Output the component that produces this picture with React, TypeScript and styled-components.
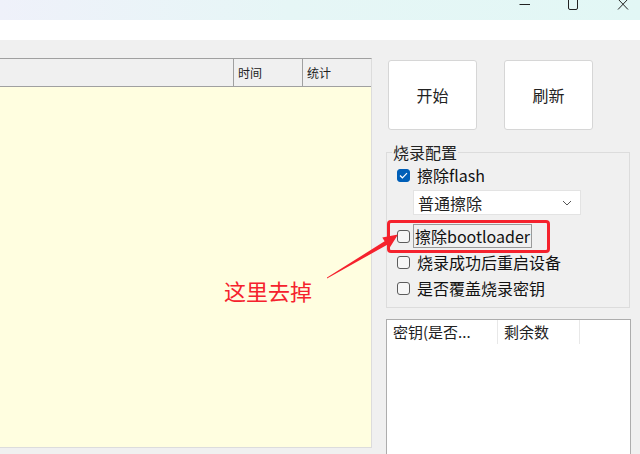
import styled, { createGlobalStyle } from "styled-components";

const GlobalStyle = createGlobalStyle`
  html, body { margin: 0; padding: 0; }
  body {
    font-family: "Noto Sans CJK SC", "Noto Sans", sans-serif;
    color: #1a1a1a;
  }
`;

const keyColumns = [
  { label: "密钥(是否...", width: 111 },
  { label: "剩余数", width: 82 },
];

const logColumns = [
  { label: "", width: 234 },
  { label: "时间", width: 69 },
  { label: "统计", width: 68 },
];

const Checkbox = ({ checked }: { checked?: boolean }) => (
  <S.Box $checked={checked}>
    {checked && (
      <svg width="9" height="7" viewBox="0 0 9 7">
        <path d="M1 3.5 L3.4 5.8 L8 1.2" fill="none" stroke="#fff" strokeWidth="1.2" />
      </svg>
    )}
  </S.Box>
);

const App = () => {
  return (
    <S.Page>
      <GlobalStyle />
      <S.TitleBar>
        <S.WinButton>
          <svg width="12" height="10" viewBox="0 0 12 10">
            <path d="M0.5 4.5 H11" stroke="#222" strokeWidth="1" />
          </svg>
        </S.WinButton>
        <S.WinButton>
          <svg width="12" height="12" viewBox="0 0 12 12">
            <rect x="1.5" y="-2" width="9" height="11.5" rx="1.5" fill="none" stroke="#222" strokeWidth="1" />
          </svg>
        </S.WinButton>
        <S.WinButton $close>
          <svg width="12" height="12" viewBox="0 0 12 12">
            <path d="M1 -1 L11 9.5 M11 -1 L1 9.5" stroke="#222" strokeWidth="1" />
          </svg>
        </S.WinButton>
      </S.TitleBar>
      <S.MenuBand />
      <S.Body>
        <S.LogTable>
          <S.LogHeader>
            {logColumns.map((c, i) => (
              <S.LogHeaderCell key={i} style={{ width: c.width }}>
                {c.label}
              </S.LogHeaderCell>
            ))}
          </S.LogHeader>
        </S.LogTable>

        <S.Side>
          <S.ButtonRow>
            <S.BigButton>开始</S.BigButton>
            <S.BigButton>刷新</S.BigButton>
          </S.ButtonRow>

          <S.Group>
            <S.Legend>烧录配置</S.Legend>
            <S.CheckRow>
              <Checkbox checked />
              <S.CheckLabel>擦除flash</S.CheckLabel>
            </S.CheckRow>
            <S.Select>
              <span>普通擦除</span>
              <svg width="10" height="6" viewBox="0 0 10 6">
                <path d="M1 1 L5 5 L9 1" fill="none" stroke="#555" strokeWidth="1" />
              </svg>
            </S.Select>
            <S.CheckRow $gap={8}>
              <Checkbox />
              <S.CheckLabel $focused>擦除bootloader</S.CheckLabel>
            </S.CheckRow>
            <S.CheckRow>
              <Checkbox />
              <S.CheckLabel>烧录成功后重启设备</S.CheckLabel>
            </S.CheckRow>
            <S.CheckRow>
              <Checkbox />
              <S.CheckLabel>是否覆盖烧录密钥</S.CheckLabel>
            </S.CheckRow>
          </S.Group>

          <S.KeyList>
            <S.KeyHeader>
              {keyColumns.map((c) => (
                <S.KeyHeaderCell key={c.label} style={{ width: c.width }}>
                  {c.label}
                </S.KeyHeaderCell>
              ))}
            </S.KeyHeader>
          </S.KeyList>
        </S.Side>
      </S.Body>

      <S.Highlight />
      <S.Arrow width="640" height="454" viewBox="0 0 640 454">
        <polygon
          points="327,277.5 384.6,241.3 382.3,237.4 398,234.5 389.2,248.6 386.8,245 327,278.5"
          fill="#f5222d"
        />
      </S.Arrow>
      <S.Note>这里去掉</S.Note>
    </S.Page>
  );
};

const S = {
  Page: styled.div`
    position: relative;
    width: 640px;
    height: 454px;
    overflow: hidden;
    background: #f0f0f0;
  `,
  TitleBar: styled.div`
    height: 20px;
    display: flex;
    justify-content: flex-end;
    align-items: flex-start;
    background: linear-gradient(90deg, #eff1fa 0%, #e6f6f6 45%, #e2f7f5 100%);
  `,
  WinButton: styled.div<{ $close?: boolean }>`
    box-sizing: border-box;
    width: ${(p) => (p.$close ? 43 : 48)}px;
    height: 20px;
    display: flex;
    justify-content: ${(p) => (p.$close ? "flex-start" : "center")};
    padding-left: ${(p) => (p.$close ? 20 : 0)}px;
    align-items: flex-start;
  `,
  MenuBand: styled.div`
    height: 20px;
    background: #ffffff;
  `,
  Body: styled.div`
    display: flex;
    align-items: flex-start;
    padding-top: 18px;
  `,
  LogTable: styled.div`
    width: 371px;
    height: 388px;
    border-top: 1px solid #a0a0a0;
    border-right: 1px solid #dcdcdc;
    border-bottom: 1px solid #dcdcdc;
    background: #fffee0;
  `,
  LogHeader: styled.div`
    display: flex;
    height: 27px;
    background: #f0f0f0;
    border-bottom: 1px solid #a0a0a0;
  `,
  LogHeaderCell: styled.div`
    box-sizing: border-box;
    height: 27px;
    padding-left: 4px;
    font-size: 12px;
    line-height: 28px;
    color: #222;
    border-right: 1px solid #a0a0a0;
    &:last-child {
      border-right: none;
    }
  `,
  Side: styled.div`
    margin-left: 14px;
    width: 244px;
    display: flex;
    flex-direction: column;
  `,
  ButtonRow: styled.div`
    display: flex;
    gap: 27px;
    margin-top: 2px;
    padding-left: 2px;
  `,
  BigButton: styled.div`
    box-sizing: border-box;
    width: 89px;
    height: 70px;
    background: #ffffff;
    border: 1px solid #d6d6d6;
    border-radius: 3px;
    display: flex;
    justify-content: center;
    align-items: center;
    font-size: 16px;
    color: #222;
  `,
  Group: styled.fieldset`
    box-sizing: border-box;
    margin: 13px 0 0 0;
    padding: 1px 8px 6px 10px;
    width: 244px;
    border: 1px solid #dcdcdc;
    border-radius: 0;
    display: flex;
    flex-direction: column;
  `,
  Legend: styled.legend`
    padding: 0 1px;
    margin-left: -5px;
    font-size: 16px;
    line-height: 18px;
    color: #222;
  `,
  CheckRow: styled.div<{ $gap?: number }>`
    display: flex;
    align-items: center;
    height: 26px;
    margin-top: ${(p) => p.$gap ?? 0}px;
  `,
  Box: styled.span<{ $checked?: boolean }>`
    box-sizing: border-box;
    width: 13px;
    height: 13px;
    border-radius: 3px;
    display: flex;
    justify-content: center;
    align-items: center;
    border: 1px solid ${(p) => (p.$checked ? "#005fb8" : "#5c5c5c")};
    background: ${(p) => (p.$checked ? "#005fb8" : "#f7f7f7")};
    margin-right: 5px;
  `,
  CheckLabel: styled.span<{ $focused?: boolean }>`
    box-sizing: border-box;
    font-size: 16px;
    line-height: 22px;
    color: #111;
    padding: 0 1px;
    margin-left: ${(p) => (p.$focused ? -2 : 0)}px;
    border: 1px ${(p) => (p.$focused ? "solid #9a9a9a" : "solid transparent")};
    height: 24px;
  `,
  Select: styled.div`
    box-sizing: border-box;
    margin: 2px 0 0 16px;
    width: 168px;
    height: 25px;
    background: #ffffff;
    border: 1px solid #e3e3e3;
    display: flex;
    align-items: center;
    justify-content: space-between;
    padding: 0 8px 0 4px;
    font-size: 16px;
    color: #222;
  `,
  KeyList: styled.div`
    box-sizing: border-box;
    margin-top: 11px;
    width: 245px;
    height: 140px;
    background: #ffffff;
    border: 1px solid #adadad;
  `,
  KeyHeader: styled.div`
    display: flex;
    height: 24px;
  `,
  KeyHeaderCell: styled.div`
    box-sizing: border-box;
    padding-left: 6px;
    font-size: 15px;
    line-height: 24px;
    color: #222;
    border-right: 1px solid #e8e8e8;
    white-space: nowrap;
    overflow: hidden;
  `,
  Highlight: styled.div`
    position: absolute;
    left: 387px;
    top: 220px;
    width: 163px;
    height: 33px;
    box-sizing: border-box;
    border: 3px solid #f5222d;
    border-radius: 4px;
  `,
  Arrow: styled.svg`
    position: absolute;
    left: 0;
    top: 0;
    pointer-events: none;
  `,
  Note: styled.div`
    position: absolute;
    left: 224px;
    top: 275px;
    font-size: 22px;
    line-height: 30px;
    color: #f5222d;
  `,
};

export default App;
